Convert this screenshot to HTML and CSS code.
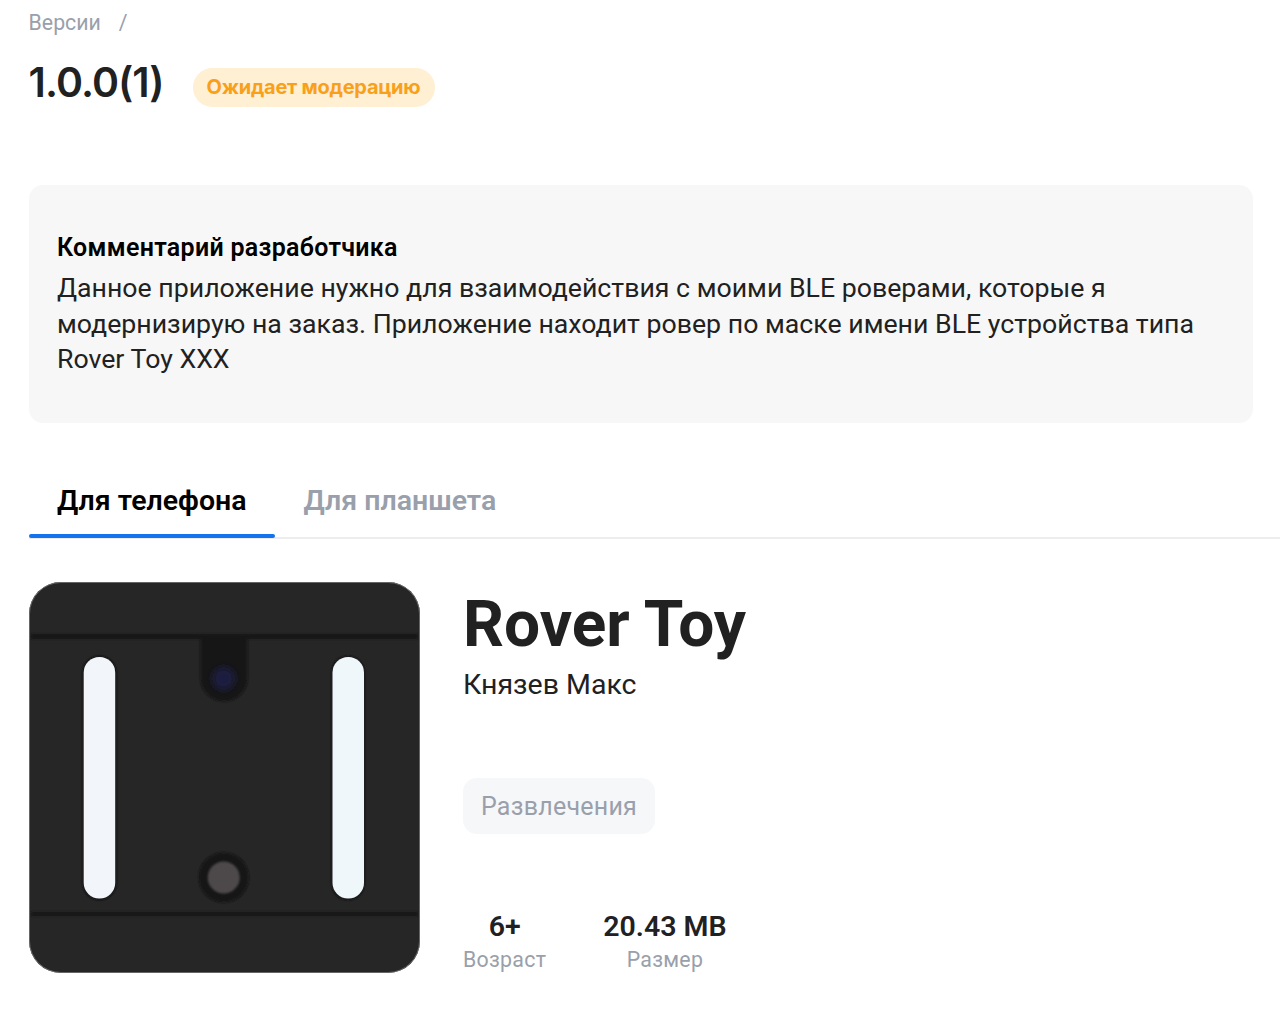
FILE: index.html
```html
<!DOCTYPE html>
<html lang="ru">

<head>
    <meta charset="utf-8">
    <title>Rover Toy</title>
    <link rel="stylesheet" href="styles.css">
</head>

<body>
    <nav class="breadcrumbs">
        <a class="breadcrumb">Версии</a>
        <span>/</span>
    </nav>

    <header class="version">
        <h1 class="version-title">1.0.0(1)</h1>
        <span class="badge">Ожидает модерацию</span>
    </header>

    <section class="comment">
        <h2 class="comment-title">Комментарий разработчика</h2>
        <p class="comment-text">Данное приложение нужно для взаимодействия с моими BLE роверами, которые я модернизирую на заказ. Приложение находит ровер по маске имени BLE устройства типа Rover Toy XXX</p>
    </section>

    <div class="tabs">
        <a class="tab active">Для телефона</a>
        <a class="tab">Для планшета</a>
    </div>

    <main class="app">
        <svg class="app-icon" viewBox="0 0 391 391">
            <defs>
                <clipPath id="rounded">
                    <rect width="391" height="391" rx="32" />
                </clipPath>
                <filter id="soft" x="-20%" y="-20%" width="140%" height="140%">
                    <feGaussianBlur stdDeviation="0.8" />
                </filter>
                <filter id="lens" x="-50%" y="-50%" width="200%" height="200%">
                    <feGaussianBlur stdDeviation="3" />
                </filter>
            </defs>
            <g clip-path="url(#rounded)">
                <rect width="391" height="391" fill="#262626" />
                <!-- panel seams -->
                <g filter="url(#soft)" fill="#131313">
                    <rect x="2" y="52" width="387" height="5" />
                    <rect x="2" y="330" width="387" height="4" />
                    <path d="M171.500 54H218.500V96A23.500 23.500 0 0 1 171.500 96Z" />
                    <circle cx="194.700" cy="295.500" r="25" />
                    <rect x="53.500" y="74" width="34" height="244" rx="17" />
                    <rect x="302.500" y="74" width="33" height="244" rx="16.500" />
                </g>
                <!-- camera and button -->
                <circle cx="194.700" cy="96.500" r="11.500" fill="#1a1b40" filter="url(#lens)" />
                <circle cx="194.700" cy="295.500" r="16" fill="#4d4a4b" filter="url(#soft)" />
                <!-- light bars -->
                <rect x="54.700" y="75" width="31.500" height="241.500" rx="15.700" fill="#f2f6fb" />
                <rect x="303.500" y="75" width="31.500" height="241.500" rx="15.700" fill="#f0f7fb" />
            </g>
            <rect x=".5" y=".5" width="390" height="390" rx="31.500" fill="none" stroke="#777" stroke-opacity=".8" />
        </svg>

        <div class="app-info">
            <h2 class="app-name">Rover Toy</h2>
            <div class="app-author">Князев Макс</div>
            <span class="category">Развлечения</span>
            <div class="facts">
                <div class="fact">
                    <div class="fact-value">6+</div>
                    <div class="fact-label">Возраст</div>
                </div>
                <div class="fact">
                    <div class="fact-value">20.43 MB</div>
                    <div class="fact-label">Размер</div>
                </div>
            </div>
        </div>
    </main>
</body>

</html>
```
FILE: styles.css
```css
:root {
    --text-color: #212121;
    --muted-color: #99a0ab;
    --accent-color: #1473ec;
}

* {
    box-sizing: border-box;
}

body {
    margin: 0;
    padding: 9px 0 0 28.6px;
    font-family: Roboto, sans-serif;
    color: var(--text-color);
    background: #fff;
}

h1,
h2,
p {
    margin: 0;
}

.breadcrumbs {
    display: flex;
    gap: 18px;
    font-size: 21.3px;
    line-height: 28px;
    color: var(--muted-color);
}

.version {
    display: flex;
    align-items: center;
    gap: 29px;
    margin-top: 17px;
    height: 57px;
    font-family: Inter, sans-serif;
}

.version-title {
    font-size: 41px;
    line-height: 57px;
    font-weight: 600;
    letter-spacing: -.95px;
}

.badge {
    margin-top: 10px;
    padding: 0 15px 0 14px;
    border-radius: 20px;
    font-size: 20px;
    line-height: 39px;
    font-weight: 700;
    letter-spacing: -.25px;
    color: #f9a01b;
    background: #ffefd3;
}

.comment {
    margin: 74px 27px 0 0;
    height: 238px;
    padding: 46px 29px 0 28.400px;
    border-radius: 14px;
    background: #f7f7f7;
}

.comment-title {
    font-size: 25px;
    line-height: 34px;
    font-weight: 600;
    letter-spacing: .3px;
    color: #000;
}

.comment-text {
    margin-top: 6px;
    font-size: 26.7px;
    line-height: 35.6px;
}

.tabs {
    display: flex;
    margin-top: 45px;
    height: 71px;
    border-bottom: 2px solid #ededef;
}

.tab {
    position: relative;
    height: 70px;
    padding: 14px 28.5px 0;
    font-size: 28.5px;
    line-height: 38px;
    font-weight: 600;
    color: var(--muted-color);
}

.tab.active {
    color: #000;
}

.tab.active::after {
    content: '';
    position: absolute;
    left: 0;
    right: 0;
    bottom: 0;
    height: 4px;
    border-radius: 2px;
    background: var(--accent-color);
}

.app {
    display: flex;
    gap: 43.4px;
    margin-top: 43px;
}

.app-icon {
    width: 391px;
    height: 391px;
    flex: none;
}

.app-info {
    display: flex;
    flex-direction: column;
    align-items: flex-start;
}

.app-name {
    margin-top: 4px;
    font-size: 64px;
    line-height: 78px;
    font-weight: 700;
}

.app-author {
    margin-top: 2px;
    font-size: 28.5px;
    line-height: 38px;
}

.category {
    margin-top: 74px;
    padding: 1px 18px 0;
    border-radius: 14px;
    font-size: 25px;
    line-height: 55px;
    letter-spacing: .25px;
    color: var(--muted-color);
    background: #f6f7f9;
}

.facts {
    display: flex;
    gap: 57px;
    margin-top: 75px;
    text-align: center;
}

.fact-value {
    font-size: 28.5px;
    line-height: 36px;
    font-weight: 600;
}

.fact-label {
    font-size: 21.3px;
    line-height: 29px;
    letter-spacing: .3px;
    color: var(--muted-color);
}
```
